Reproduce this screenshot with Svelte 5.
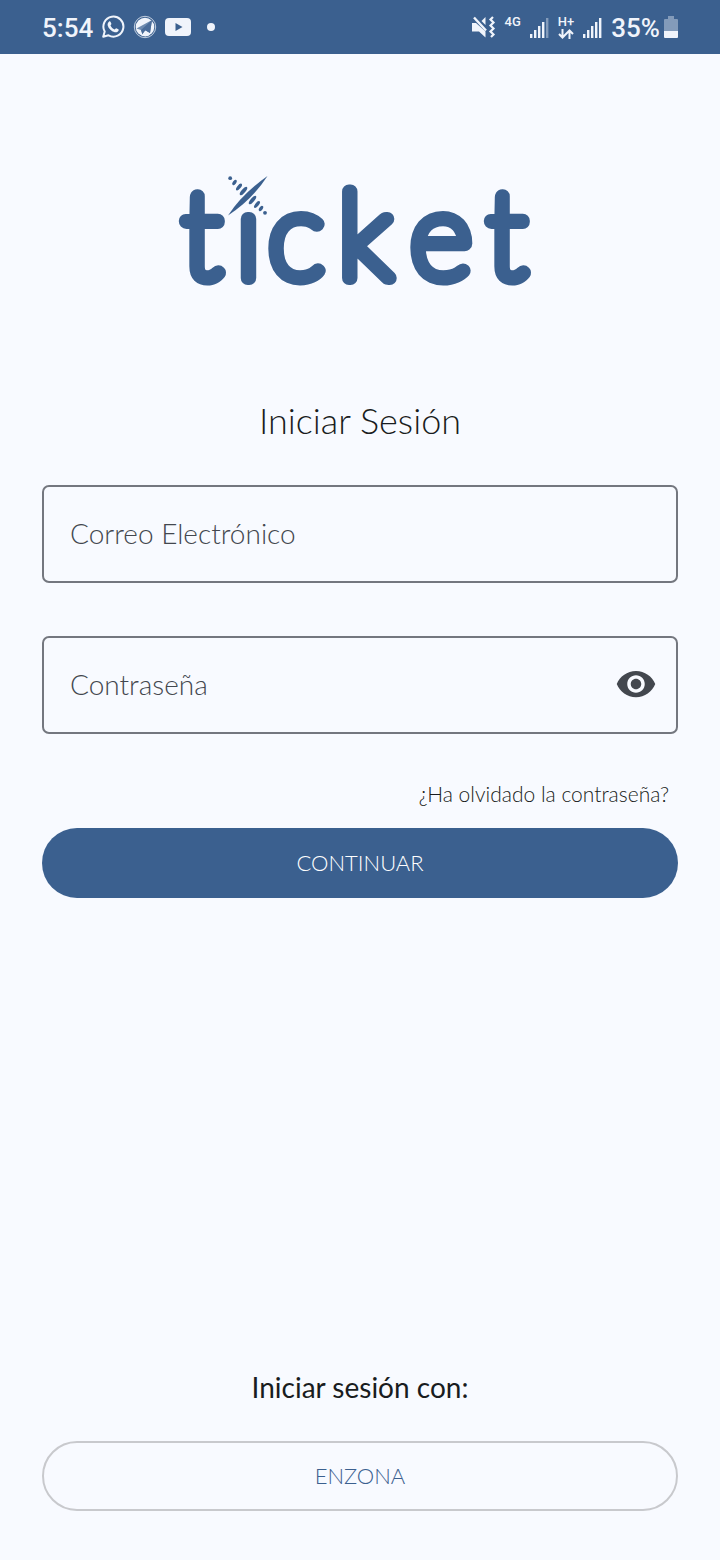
<script>
  let email = $state('');
  let password = $state('');
  let visible = $state(false);
  const bars = [4, 8, 12, 16, 20];
</script>

{#snippet signal(dimLast)}
  <svg class="signal" width="19" height="21" viewBox="0 0 19 21" aria-hidden="true">
    {#each bars as h, i}
      <rect x={i * 4} y={21 - h} width="2.4" height={h} opacity={dimLast && i === 4 ? 0.4 : 1} />
    {/each}
  </svg>
{/snippet}

<div class="page">
  <header class="status">
    <div class="group left">
      <span class="clock">5:54</span>
      <svg width="24" height="24" viewBox="0 0 24 24" aria-hidden="true">
        <path d="M2.2 21.8 3.7 16.5A10 10 0 1 1 7.5 20.3Z" fill="none" stroke="currentColor" stroke-width="2" stroke-linejoin="round" />
        <path d="M8.2 6.6c.5-.4 1.1-.3 1.4.3l.8 1.9c.2.5-.7 1.2-.9 1.6.9 1.9 2.2 3.1 4.1 4 .5-.2 1.2-1.3 1.7-1.2l2 1c.6.3.4 1.3 0 1.9-.7 1.1-2.2 1.5-3.5 1.1C10 16 7.6 13.5 6.700 10.400c-.4-1.400.4-3 1.500-3.800Z" />
      </svg>
      <svg width="24" height="24" viewBox="0 0 24 24" aria-hidden="true">
        <circle cx="12" cy="12" r="10.700" fill="none" stroke="currentColor" stroke-width="1" opacity=".75" />
        <circle cx="12" cy="12" r="9.300" />
        <path d="M3.500 13.500 19 5 17 18l-4.500-2.500-3 4-1.600-4.600Z" fill="#6e8bb0" />
        <path d="M8 14.900 19 5 17 18l-4.500-2.500-3 4Z" fill="#4a6c99" />
        <path d="m9.300 19.500 3-4 4.700 4.500-5 1.500Z" />
      </svg>
      <svg width="26" height="18" viewBox="0 0 26 18" aria-hidden="true">
        <rect x="0" y="0" width="26" height="18" rx="4" />
        <path d="M10.500 5v8l7-4Z" fill="#3b608f" />
      </svg>
      <span class="dot"></span>
    </div>
    <div class="group right">
      <svg class="mute" width="24" height="24" viewBox="0 0 24 24" aria-hidden="true">
        <path d="M0 8h4L13.500 16.500V22.500L7 16.500H0ZM9.500 6 13.500 2v8Z" />
        <path d="M2 2.500 14 15.500" stroke="currentColor" stroke-width="2.400" />
        <path d="m21 2-2.500 2.500 3 3-3 3 3 3-3 3 3 3-2.500 2.500" fill="none" stroke="currentColor" stroke-width="2.200" />
      </svg>
      <span class="net">4G</span>
      {@render signal(true)}
      <span class="data">
        <span>H+</span>
        <svg width="16" height="10" viewBox="0 0 16 10" aria-hidden="true">
          <path d="M4.500 0v8.500M1 5l3.500 3.500L8 5M11.500 10V1.500M8 5l3.500-3.500L15 5" fill="none" stroke="currentColor" stroke-width="2" />
        </svg>
      </span>
      {@render signal(false)}
      <span class="level">
        <span class="clock">35%</span>
        <svg width="14" height="22" viewBox="0 0 14 22" aria-hidden="true">
          <path d="M4 0h6v3h3a1 1 0 0 1 1 1v11H0V4a1 1 0 0 1 1-1h3Z" opacity=".4" />
          <path d="M0 15h14v6a1 1 0 0 1-1 1H1a1 1 0 0 1-1-1Z" />
        </svg>
      </span>
    </div>
  </header>

  <main>
    <svg class="logo" viewBox="0 0 360 120" role="img" aria-label="ticket">
      <text x="2 56 88 158 230 307" y="108">tıcket</text>
      <g>
        <path d="M48 45.500Q62 24 87.500 6 72 30 48 45.500Z" />
        <circle cx="50.200" cy="8.200" r="1.900" />
        <circle cx="85" cy="42.800" r="1.900" />
        <g transform="rotate(35 54.500 12.500)"><ellipse cx="54.500" cy="12.500" rx="1.700" ry="3" /></g>
        <g transform="rotate(38 59 17)"><ellipse cx="59" cy="17" rx="1.800" ry="4.200" /></g>
        <g transform="rotate(40 63.500 21)"><ellipse cx="63.500" cy="21" rx="1.900" ry="5.300" /></g>
        <g transform="rotate(40 72.500 30)"><ellipse cx="72.500" cy="30" rx="1.900" ry="5.300" /></g>
        <g transform="rotate(38 77 34.500)"><ellipse cx="77" cy="34.500" rx="1.800" ry="4.200" /></g>
        <g transform="rotate(35 81 38.500)"><ellipse cx="81" cy="38.500" rx="1.700" ry="3" /></g>
      </g>
    </svg>

    <h1>Iniciar Sesión</h1>

    <form onsubmit={(e) => e.preventDefault()}>
      <div class="field">
        <input type="email" aria-label="Correo Electrónico" placeholder="Correo Electrónico" bind:value={email} />
      </div>
      <div class="field">
        <input type={visible ? 'text' : 'password'} aria-label="Contraseña" placeholder="Contraseña" bind:value={password} />
        <button class="eye" type="button" aria-label="Mostrar contraseña" onclick={() => (visible = !visible)}>
          <svg width="42" height="42" viewBox="0 0 24 24" aria-hidden="true">
            <path d="M12 4.500C7 4.500 2.730 7.610 1 12c1.730 4.390 6 7.500 11 7.500s9.270-3.110 11-7.500c-1.730-4.390-6-7.500-11-7.500zM12 17c-2.760 0-5-2.240-5-5s2.240-5 5-5 5 2.240 5 5-2.240 5-5 5zm0-8c-1.660 0-3 1.340-3 3s1.340 3 3 3 3-1.340 3-3-1.340-3-3-3z" />
          </svg>
        </button>
      </div>
      <a class="forgot" href="#recuperar">¿Ha olvidado la contraseña?</a>
      <button class="pill primary" type="submit">CONTINUAR</button>
    </form>

    <section class="other">
      <h2>Iniciar sesión con:</h2>
      <button class="pill outline" type="button">ENZONA</button>
    </section>
  </main>
</div>

<style>
  :global(body) {
    margin: 0;
    background: #f8faff;
  }

  .page {
    display: flex;
    flex-direction: column;
    min-height: 100vh;
    color: #191c20;
    background: #f8faff;
    font-family: Lato, 'Open Sans', sans-serif;
    font-weight: 300;
  }

  .page :is(button, input) {
    box-sizing: border-box;
    font: inherit;
    color: inherit;
  }

  svg {
    display: block;
    flex: none;
    fill: currentColor;
  }

  .status {
    display: flex;
    align-items: center;
    justify-content: space-between;
    height: 54px;
    padding: 0 42px;
    color: #f0f4fb;
    background: #3b608f;
    font-family: Roboto, sans-serif;
    font-weight: 500;
  }

  .group {
    display: flex;
    align-items: center;
    gap: 9px;
  }

  .left {
    gap: 8px;
  }

  .clock {
    font-size: 26px;
    line-height: 32px;
    padding-top: 2px;
  }

  .dot {
    width: 8px;
    height: 8px;
    margin-left: 8px;
    border-radius: 50%;
    background: currentColor;
  }

  .net,
  .data {
    font-size: 13px;
    line-height: 12px;
  }

  .net {
    padding-bottom: 10px;
  }

  .data {
    display: flex;
    flex-direction: column;
    align-items: center;
    gap: 1px;
  }

  .level {
    display: flex;
    align-items: center;
    gap: 4px;
  }

  main {
    display: flex;
    flex: 1;
    flex-direction: column;
    padding: 116px 42px 49px;
  }

  .logo {
    align-self: center;
    width: 360px;
    max-width: 100%;
    overflow: visible;
    color: #3b608f;
  }

  .logo text {
    font-size: 120px;
    font-weight: 100;
    stroke: currentColor;
    stroke-width: 14px;
    stroke-linejoin: round;
  }

  h1,
  h2 {
    margin: 0;
    text-align: center;
  }

  h1 {
    margin: 106px 0 41px;
    font-size: 36px;
    font-weight: 300;
    line-height: 48px;
  }

  form {
    display: flex;
    flex-direction: column;
  }

  .field {
    display: flex;
    align-items: center;
    box-sizing: border-box;
    height: 98px;
    margin-bottom: 53px;
    padding-bottom: 2px;
    border: 2px solid #74777f;
    border-radius: 7px;
  }

  .field input {
    flex: 1;
    min-width: 0;
    height: 100%;
    padding: 0 26px;
    border: 0;
    outline: 0;
    background: transparent;
    font-size: 28px;
  }

  .field input::placeholder {
    color: #43474e;
    opacity: 1;
  }

  .page .eye {
    margin-right: 19px;
    padding: 0;
    border: 0;
    color: #43474e;
    background: transparent;
  }

  .forgot {
    align-self: flex-end;
    margin: -8px 9px 20px 0;
    color: inherit;
    font-size: 21px;
    line-height: 29px;
    text-decoration: none;
  }

  .page .pill {
    width: 100%;
    height: 70px;
    padding: 0 0 2px;
    border: 0;
    border-radius: 35px;
    font-size: 22px;
  }

  .page .primary {
    color: #fff;
    background: #3b608f;
  }

  .page .outline {
    border: 2px solid #c8c9cd;
    color: #3b608f;
    background: transparent;
  }

  .other {
    margin-top: auto;
  }

  h2 {
    margin-bottom: 36px;
    font-size: 28px;
    font-weight: 400;
    line-height: 36px;
  }
</style>
